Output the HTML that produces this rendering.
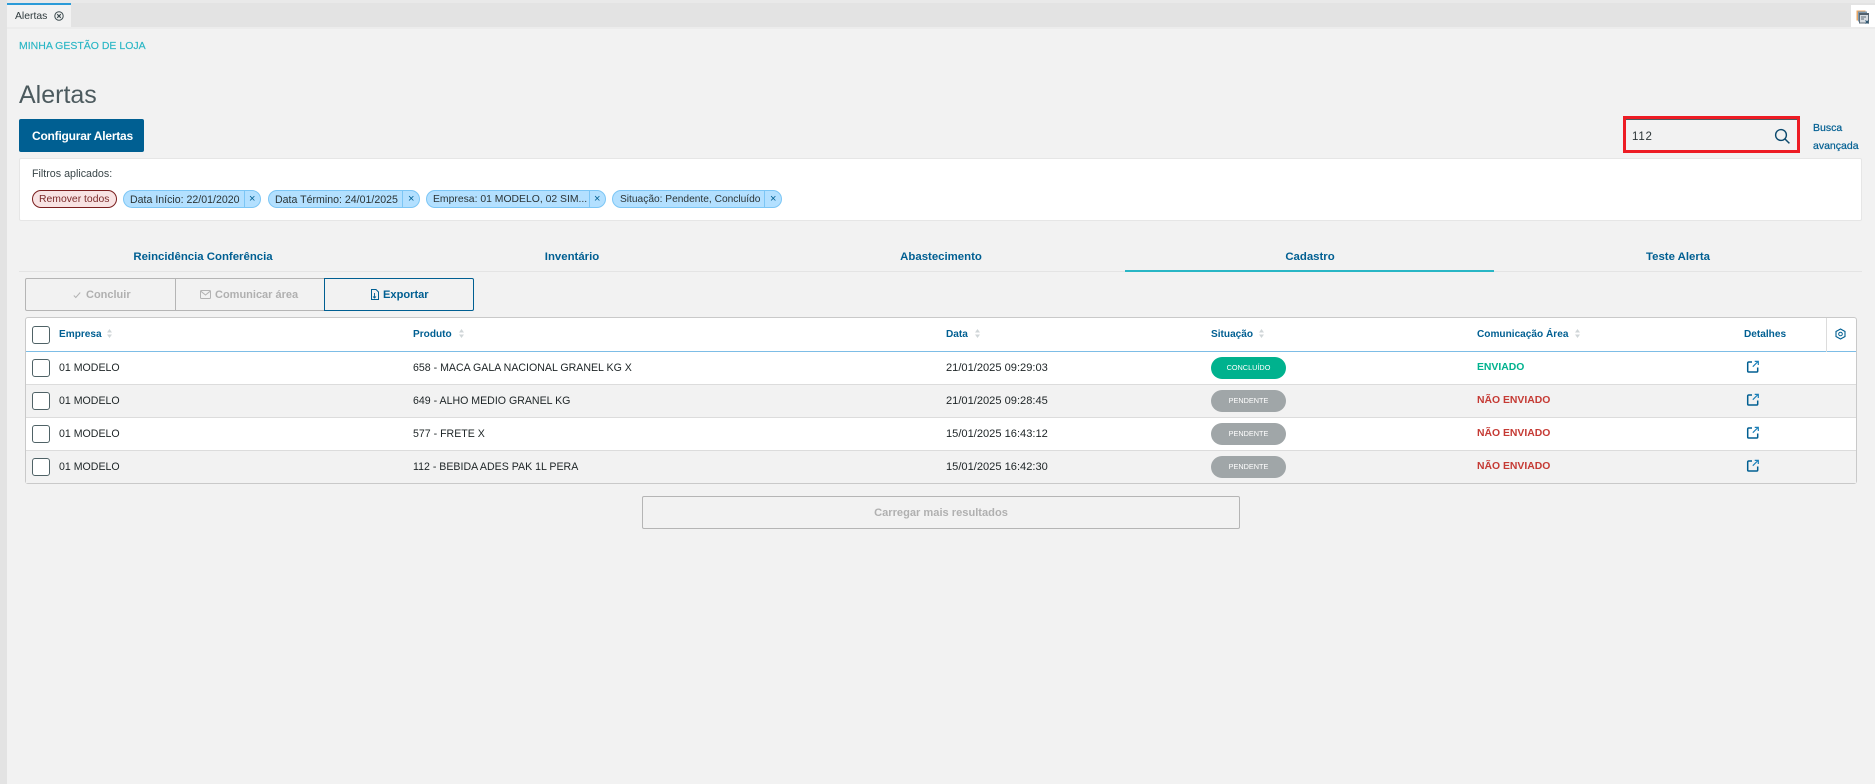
<!DOCTYPE html>
<html lang="pt-BR"><head><meta charset="utf-8"><title>Alertas</title>
<style>
html,body{margin:0;padding:0;width:1875px;height:784px;overflow:hidden;background:#f2f2f2;font-family:"Liberation Sans",sans-serif;color:#1d2426}
div,span,svg{position:absolute;box-sizing:border-box}
.t{white-space:nowrap;line-height:16px;font-size:11.5px}
.b{color:#005f92;font-weight:400;font-size:10.5px;-webkit-text-stroke:.2px #005f92}
.h{color:#005f92;font-weight:700;font-size:10.1px}
.tab{width:300px;text-align:center;top:249px;font-size:11.4px;font-weight:700;color:#005f92}
.chip{height:18px;top:190px;background:#b3e0ff;border:1px solid #7cc6f5;border-radius:9px}
.chip i{position:absolute;top:0;bottom:0;width:1px;background:#7cc6f5}
.chip span{top:1px;line-height:16px;color:#2b3436;white-space:nowrap}
.chip b{position:absolute;top:0;line-height:16px;font-size:11px;font-weight:400;color:#005f92}
.cb{left:32px;width:18px;height:18px;background:#fff;border:1px solid #4f6266;border-radius:3px}
.badge{left:1211px;width:75px;height:22px;border-radius:11px;color:#fff;font-size:7.3px;line-height:22px;text-align:center}
.row{left:26px;width:1830px;height:33px;border-bottom:1px solid #dcdcdc}
.sort{width:5px;height:9px}
.c{font-size:10.6px}
.d{font-size:11.1px}
.s{font-size:10.4px;font-weight:700}
</style></head><body>
<div style="left:0;top:0;width:1875px;height:27px;background:#e3e3e3"></div>
<div style="left:0;top:0;width:1875px;height:3px;background:#e9e9e9"></div>
<div style="left:0;top:27px;width:1875px;height:2px;background:#ececec"></div>
<div style="left:0;top:0;width:7px;height:784px;background:#e3e3e3"></div>
<div style="left:7px;top:3px;width:64px;height:24px;background:#f2f2f2;border-top:2px solid #2b9bd8"></div>
<span class="t" style="left:15px;top:9px;font-size:10.4px;color:#2f3a3d">Alertas</span>
<svg style="left:54px;top:11px" width="10" height="10" viewBox="0 0 10 10"><circle cx="5" cy="5" r="4.2" fill="none" stroke="#3c4a4e" stroke-width="1"/><path d="M3.2 3.2l3.6 3.6M6.8 3.2l-3.6 3.6" stroke="#3c4a4e" stroke-width="1.1"/></svg>
<div style="left:1851px;top:5px;width:24px;height:22px;background:#fff"></div>
<svg style="left:1856px;top:10px" width="14" height="14" viewBox="0 0 14 14"><rect x="0.5" y="0.5" width="9" height="10" fill="#e9a765"/><rect x="2" y="1.5" width="9" height="10" fill="#7d97ad"/><rect x="3.5" y="4" width="9" height="9" fill="#d8dde2" stroke="#5f6d78"/><rect x="3" y="3" width="10" height="2" fill="#53616d"/><path d="M5 7h5M5 9h3" stroke="#5f6d78"/><path d="M9.5 10.5l3 3M12.5 10.5l-3 3" stroke="#27526f" stroke-width="1"/></svg>

<span class="t" style="left:19px;top:38px;font-size:10.5px;color:#29b6c5;-webkit-text-stroke:.15px #29b6c5">MINHA GESTÃO DE LOJA</span>
<span class="t" style="left:19px;top:78px;font-size:25px;line-height:34px;color:#4c5a5e">Alertas</span>
<div style="left:19px;top:119px;width:125px;height:33px;background:#005f92;border-radius:2px"></div>
<span class="t" style="left:32px;top:128px;font-size:12px;font-weight:700;color:#fff;letter-spacing:-.22px">Configurar Alertas</span>

<div style="left:1623px;top:116px;width:177px;height:37px;border:3px solid #ed1c24;background:#f2f2f2"></div>
<div style="left:1626px;top:119px;width:171px;height:1px;background:#4a5a60"></div>
<span class="t" style="left:1632px;top:129px;font-size:11.5px;letter-spacing:.8px;color:#2b3436">112</span>
<svg style="left:1774px;top:128px" width="17" height="17" viewBox="0 0 17 17"><circle cx="7" cy="7" r="5.4" fill="none" stroke="#0c4a6e" stroke-width="1.4"/><path d="M11 11l4.4 4.4" stroke="#0c4a6e" stroke-width="1.5"/></svg>
<span class="t b" style="left:1813px;top:120px">Busca</span>
<span class="t b" style="left:1813px;top:138px">avançada</span>

<div style="left:19px;top:158px;width:1843px;height:63px;background:#fff;border:1px solid #e6e6e6;border-radius:2px"></div>
<span class="t" style="left:32px;top:166px;font-size:10.7px;color:#3a4649">Filtros aplicados:</span>
<div style="left:32px;top:190px;width:85px;height:18px;background:#f8e3e3;border:1px solid #7a1f1f;border-radius:9px"></div>
<span class="t" style="left:39px;top:192px;font-size:10.4px;color:#7a2a2a">Remover todos</span>

<div class="chip" style="left:123px;width:138px"><span style="left:6px;font-size:10.6px">Data Início: 22/01/2020</span><i style="left:120px"></i><b style="left:125px">×</b></div>
<div class="chip" style="left:268px;width:152px"><span style="left:6px;font-size:10.6px">Data Término: 24/01/2025</span><i style="left:133px"></i><b style="left:139px">×</b></div>
<div class="chip" style="left:426px;width:180px"><span style="left:6px;font-size:10.4px">Empresa: 01 MODELO, 02 SIM...</span><i style="left:162px"></i><b style="left:167px">×</b></div>
<div class="chip" style="left:612px;width:170px"><span style="left:7px;font-size:10.2px">Situação: Pendente, Concluído</span><i style="left:151px"></i><b style="left:157px">×</b></div>

<span class="t tab" style="left:53px">Reincidência Conferência</span>
<span class="t tab" style="left:422px">Inventário</span>
<span class="t tab" style="left:791px">Abastecimento</span>
<span class="t tab" style="left:1160px">Cadastro</span>
<span class="t tab" style="left:1528px">Teste Alerta</span>
<div style="left:19px;top:271px;width:1843px;height:1px;background:#e4e4e4"></div>
<div style="left:1125px;top:270px;width:369px;height:2px;background:#29b6c5"></div>

<div style="left:25px;top:278px;width:151px;height:33px;border:1px solid #b5b5b5;border-radius:2px 0 0 2px"></div>
<div style="left:175px;top:278px;width:150px;height:33px;border:1px solid #b5b5b5"></div>
<div style="left:324px;top:278px;width:150px;height:33px;border:1px solid #005f92;border-radius:0 2px 2px 0"></div>
<svg style="left:73px;top:291px" width="8" height="8" viewBox="0 0 8 8"><path d="M.8 4.5l2 2L7.2 1.5" fill="none" stroke="#b3b3b3"/></svg>
<span class="t" style="left:86px;top:287px;font-size:11px;font-weight:700;color:#b0b0b0">Concluir</span>
<svg style="left:200px;top:290px" width="11" height="9" viewBox="0 0 11 9"><rect x=".5" y=".5" width="10" height="8" rx="1" fill="none" stroke="#b3b3b3"/><path d="M.8 1.2L5.5 5l4.7-3.8" fill="none" stroke="#b3b3b3"/></svg>
<span class="t" style="left:215px;top:287px;font-size:11px;font-weight:700;color:#b0b0b0">Comunicar área</span>
<svg style="left:370px;top:289px" width="9" height="11" viewBox="0 0 9 11"><path d="M1.5.5H6L8.5 3v7.5h-7z" fill="none" stroke="#005f92"/><path d="M4.5 4v5M3 7.5l1.5 1.5L6 7.5" fill="none" stroke="#005f92" stroke-width=".9"/></svg>
<span class="t" style="left:383px;top:287px;font-size:11.1px;font-weight:700;color:#005f92">Exportar</span>

<div style="left:25px;top:317px;width:1832px;height:167px;background:#fff;border:1px solid #c9c9c9;border-radius:3px"></div>
<div style="left:26px;top:351px;width:1830px;height:1px;background:#7dbde6"></div>
<div style="left:1826px;top:318px;width:1px;height:34px;background:#dcdcdc"></div>
<div class="row" style="top:352px;height:33px;background:#fff"></div>
<div class="row" style="top:385px;background:#f2f2f2"></div>
<div class="row" style="top:418px;background:#fff"></div>
<div class="row" style="top:451px;height:32px;background:#f2f2f2;border-bottom:0"></div>

<div class="cb" style="top:326px"></div>
<div class="cb" style="top:359px"></div>
<div class="cb" style="top:392px"></div>
<div class="cb" style="top:425px"></div>
<div class="cb" style="top:458px"></div>

<span class="t h" style="left:59px;top:327px">Empresa</span>
<span class="t h" style="left:413px;top:327px">Produto</span>
<span class="t h" style="left:946px;top:327px">Data</span>
<span class="t h" style="left:1211px;top:327px">Situação</span>
<span class="t h" style="left:1477px;top:327px">Comunicação Área</span>
<span class="t h" style="left:1744px;top:327px">Detalhes</span>
<svg class="sort" style="left:107px;top:329px" viewBox="0 0 5 9"><path d="M2.5 0L5 3.5H0zM2.5 9L0 5.5h5z" fill="#d0d6d8"/></svg>
<svg class="sort" style="left:459px;top:329px" viewBox="0 0 5 9"><path d="M2.5 0L5 3.5H0zM2.5 9L0 5.5h5z" fill="#d0d6d8"/></svg>
<svg class="sort" style="left:975px;top:329px" viewBox="0 0 5 9"><path d="M2.5 0L5 3.5H0zM2.5 9L0 5.5h5z" fill="#d0d6d8"/></svg>
<svg class="sort" style="left:1259px;top:329px" viewBox="0 0 5 9"><path d="M2.5 0L5 3.5H0zM2.5 9L0 5.5h5z" fill="#d0d6d8"/></svg>
<svg class="sort" style="left:1575px;top:329px" viewBox="0 0 5 9"><path d="M2.5 0L5 3.5H0zM2.5 9L0 5.5h5z" fill="#d0d6d8"/></svg>
<svg style="left:1835px;top:328px" width="11" height="12" viewBox="0 0 11 12"><path d="M5.5 1L10 3.5V8.5L5.5 11L1 8.5V3.5Z" fill="none" stroke="#005f92" stroke-width="1.1"/><circle cx="5.5" cy="6" r="1.8" fill="none" stroke="#005f92"/></svg>

<span class="t c" style="left:59px;top:360px">01 MODELO</span>
<span class="t c" style="left:59px;top:393px">01 MODELO</span>
<span class="t c" style="left:59px;top:426px">01 MODELO</span>
<span class="t c" style="left:59px;top:459px">01 MODELO</span>
<span class="t c" style="left:413px;top:360px">658 - MACA GALA NACIONAL GRANEL KG X</span>
<span class="t c" style="left:413px;top:393px">649 - ALHO MEDIO GRANEL KG</span>
<span class="t c" style="left:413px;top:426px">577 - FRETE X</span>
<span class="t c" style="left:413px;top:459px">112 - BEBIDA ADES PAK 1L PERA</span>
<span class="t d" style="left:946px;top:360px">21/01/2025 09:29:03</span>
<span class="t d" style="left:946px;top:393px">21/01/2025 09:28:45</span>
<span class="t d" style="left:946px;top:426px">15/01/2025 16:43:12</span>
<span class="t d" style="left:946px;top:459px">15/01/2025 16:42:30</span>

<div class="badge" style="top:357px;background:#00b28e">CONCLUÍDO</div>
<div class="badge" style="top:390px;background:#a0a6a8">PENDENTE</div>
<div class="badge" style="top:423px;background:#a0a6a8">PENDENTE</div>
<div class="badge" style="top:456px;background:#a0a6a8">PENDENTE</div>

<span class="t s" style="left:1477px;top:360px;color:#00b28e">ENVIADO</span>
<span class="t s" style="left:1477px;top:393px;color:#c53a34">NÃO ENVIADO</span>
<span class="t s" style="left:1477px;top:426px;color:#c53a34">NÃO ENVIADO</span>
<span class="t s" style="left:1477px;top:459px;color:#c53a34">NÃO ENVIADO</span>

<svg style="left:1746px;top:360px" width="14" height="13" viewBox="0 0 14 13"><path d="M6 2H2.7a1 1 0 0 0-1 1v8a1 1 0 0 0 1 1h8a1 1 0 0 0 1-1V7.5" fill="none" stroke="#005f92" stroke-width="1.5"/><path d="M6.8 6.7L11.5 2M8.7 1.4h3.6V5" fill="none" stroke="#1a7fb8" stroke-width="1.2"/></svg>
<svg style="left:1746px;top:393px" width="14" height="13" viewBox="0 0 14 13"><path d="M6 2H2.7a1 1 0 0 0-1 1v8a1 1 0 0 0 1 1h8a1 1 0 0 0 1-1V7.5" fill="none" stroke="#005f92" stroke-width="1.5"/><path d="M6.8 6.7L11.5 2M8.7 1.4h3.6V5" fill="none" stroke="#1a7fb8" stroke-width="1.2"/></svg>
<svg style="left:1746px;top:426px" width="14" height="13" viewBox="0 0 14 13"><path d="M6 2H2.7a1 1 0 0 0-1 1v8a1 1 0 0 0 1 1h8a1 1 0 0 0 1-1V7.5" fill="none" stroke="#005f92" stroke-width="1.5"/><path d="M6.8 6.7L11.5 2M8.7 1.4h3.6V5" fill="none" stroke="#1a7fb8" stroke-width="1.2"/></svg>
<svg style="left:1746px;top:459px" width="14" height="13" viewBox="0 0 14 13"><path d="M6 2H2.7a1 1 0 0 0-1 1v8a1 1 0 0 0 1 1h8a1 1 0 0 0 1-1V7.5" fill="none" stroke="#005f92" stroke-width="1.5"/><path d="M6.8 6.7L11.5 2M8.7 1.4h3.6V5" fill="none" stroke="#1a7fb8" stroke-width="1.2"/></svg>

<div style="left:642px;top:496px;width:598px;height:33px;border:1px solid #b5b5b5;border-radius:2px"></div>
<span class="t" style="left:642px;width:598px;text-align:center;top:505px;font-size:11.1px;font-weight:700;color:#b0b0b0">Carregar mais resultados</span>
</body></html>
